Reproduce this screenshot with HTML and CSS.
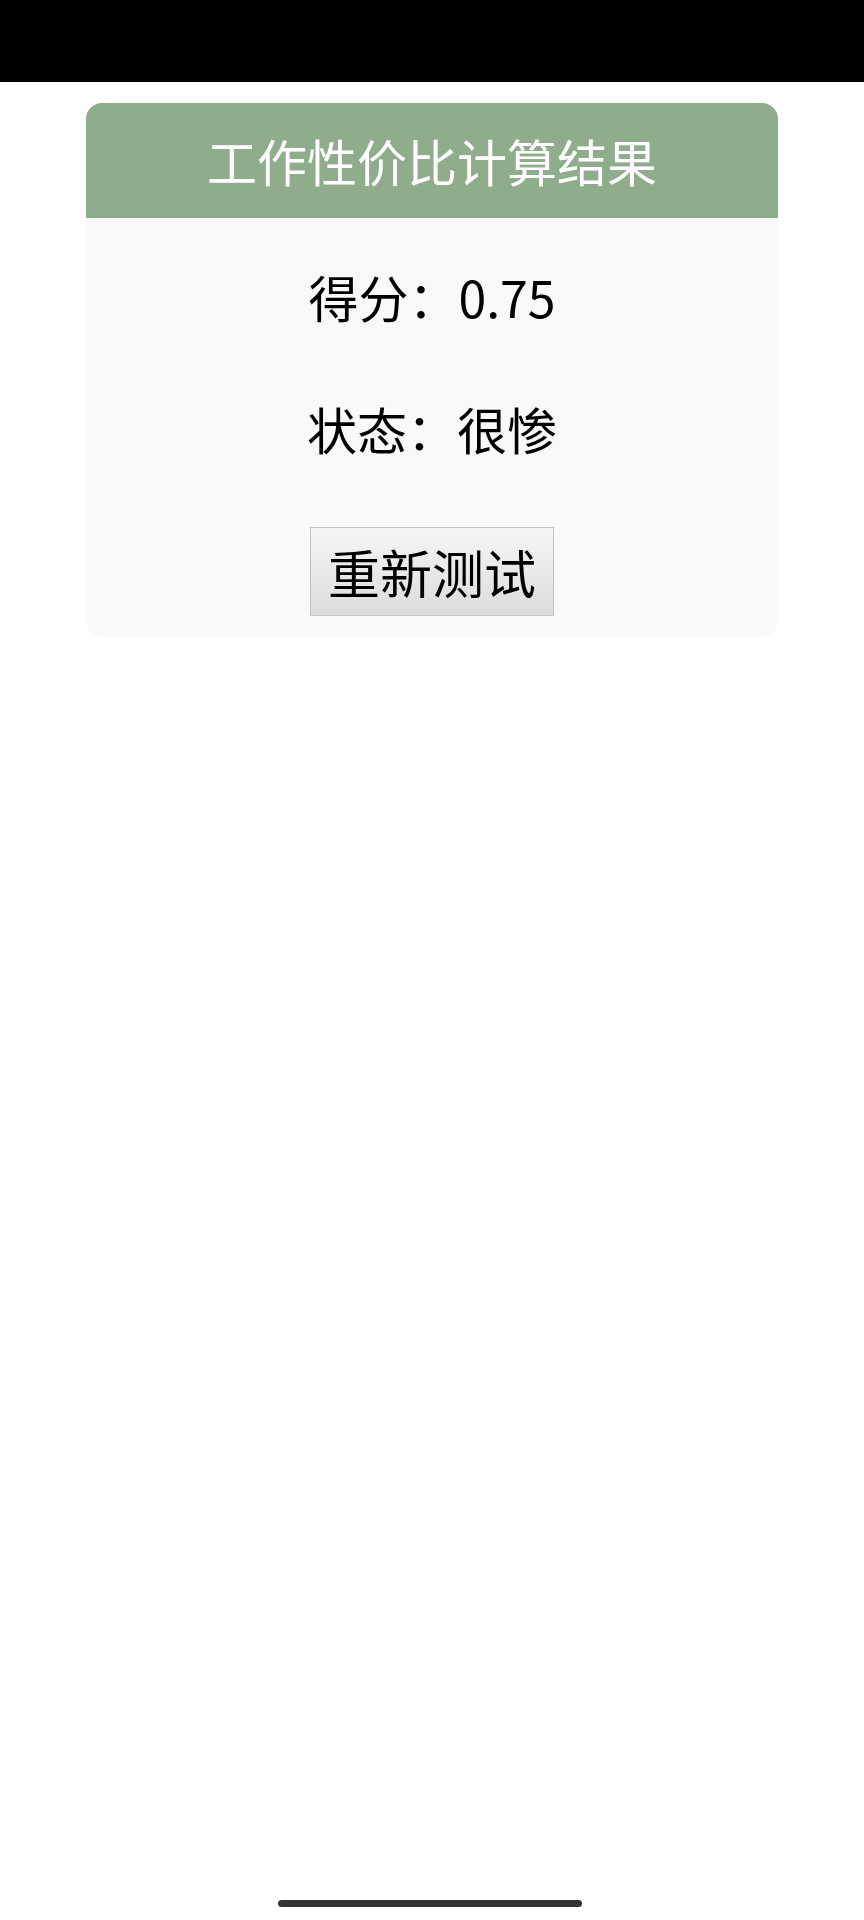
FILE: index.html
```html
<!DOCTYPE html>
<html lang="zh-CN">
<head>
<meta charset="utf-8">
<title>工作性价比计算结果</title>
<link rel="stylesheet" href="styles.css">
</head>
<body>
<div class="status-bar"></div>
<main class="page">
  <section class="card">
    <header class="card-header">工作性价比计算结果</header>
    <div class="card-body">
      <div class="row">得分：0.75</div>
      <div class="row">状态：很惨</div>
      <button class="retry" type="button">重新测试</button>
    </div>
  </section>
</main>
<div class="home-indicator"></div>
</body>
</html>
```
FILE: styles.css
```css
html, body {
  margin: 0;
  padding: 0;
}
body {
  width: 864px;
  height: 1920px;
  background: #ffffff;
  font-family: "Noto Sans CJK SC", "Noto Sans", sans-serif;
  color: #000;
  position: relative;
  overflow: hidden;
}
.status-bar {
  height: 82px;
  background: #000;
}
.page {
  display: flex;
  justify-content: center;
  padding-top: 21px;
}
.card {
  width: 692px;
  border-radius: 16px;
  overflow: hidden;
  background: #f9f9f9;
}
.card-header {
  height: 115px;
  background: #8fac8c;
  color: #fff;
  font-size: 50px;
  line-height: 115px;
  text-align: center;
}
.card-body {
  display: flex;
  flex-direction: column;
  align-items: center;
  gap: 60px;
  padding: 42px 20px 21px;
}
.row {
  font-size: 50px;
  line-height: 72px;
  height: 72px;
}
.retry {
  margin-top: 3px;
  width: 244px;
  height: 89px;
  padding: 0;
  border: 1px solid #c2c2c2;
  border-radius: 0;
  background: linear-gradient(#f6f6f6, #dcdcdc);
  font-family: "Noto Sans CJK SC", sans-serif;
  font-size: 52px;
  line-height: 87px;
  color: #000;
}
.home-indicator {
  position: absolute;
  left: 278px;
  top: 1900px;
  width: 304px;
  height: 7px;
  border-radius: 4px;
  background: #333;
}
```
